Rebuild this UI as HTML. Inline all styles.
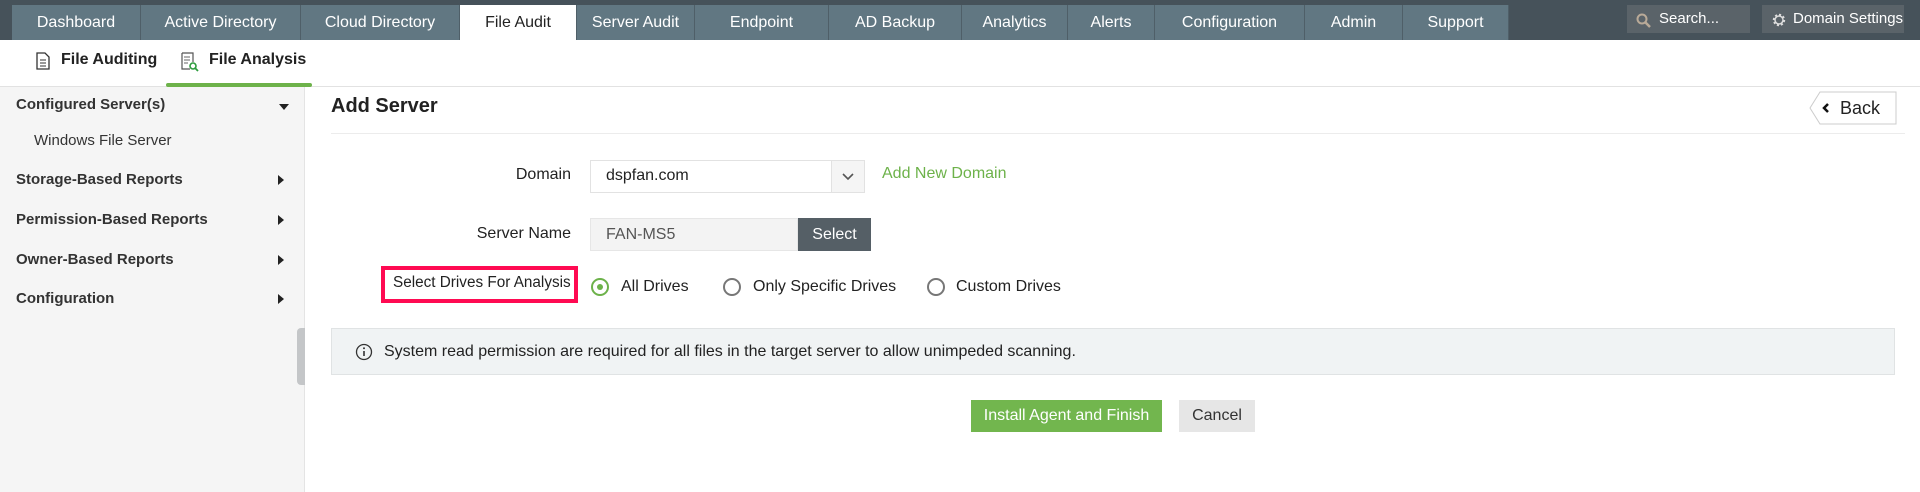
<!DOCTYPE html>
<html><head><meta charset="utf-8"><style>
*{box-sizing:border-box;margin:0;padding:0}
body{width:1920px;height:492px;overflow:hidden;background:#fff;font-family:"Liberation Sans",sans-serif;color:#222;position:relative;font-size:16px}
.a{position:absolute}
.top{left:0;top:0;width:1920px;height:40px;background:#46525a}
.tab{position:absolute;top:5px;height:35px;background:#617782;color:#fff;font-size:16px;line-height:35px;text-align:center;border-right:1px solid #4f5f68}
.tab.on{background:#fff;color:#222}
.tb{top:5px;height:28px;background:#5a6369;color:#fff;font-size:15px;line-height:28px}
.sub{left:0;top:40px;width:1920px;height:47px;border-bottom:1px solid #e2e2e2}
.side{left:0;top:87px;width:305px;height:405px;background:#f5f5f5;border-right:1px solid #e4e4e4}
.si{position:absolute;left:16px;font-size:15px;color:#333}
.arr{position:absolute;left:278px;width:0;height:0;border-top:5px solid transparent;border-bottom:5px solid transparent;border-left:6px solid #222}
.lbl{font-size:16px;color:#222}
.radio{position:absolute;width:18px;height:18px;border:2px solid #777;border-radius:50%}
</style></head><body>
<div class="a top"></div>
<div class="tab" style="left:12px;width:129px">Dashboard</div>
<div class="tab" style="left:141px;width:160px">Active Directory</div>
<div class="tab" style="left:301px;width:159px">Cloud Directory</div>
<div class="tab on" style="left:460px;width:117px">File Audit</div>
<div class="tab" style="left:577px;width:118px">Server Audit</div>
<div class="tab" style="left:695px;width:134px">Endpoint</div>
<div class="tab" style="left:829px;width:133px">AD Backup</div>
<div class="tab" style="left:962px;width:106px">Analytics</div>
<div class="tab" style="left:1068px;width:87px">Alerts</div>
<div class="tab" style="left:1155px;width:150px">Configuration</div>
<div class="tab" style="left:1305px;width:98px">Admin</div>
<div class="tab" style="left:1403px;width:106px">Support</div>
<div class="a tb" style="left:1627px;width:123px;padding-left:32px">Search...</div>
<svg class="a" style="left:1636px;top:13px" width="16" height="16"><circle cx="6" cy="6" r="4.5" fill="none" stroke="#b9aa98" stroke-width="2"/><path d="M9 9l5 5" stroke="#b9aa98" stroke-width="2.5"/></svg>
<div class="a tb" style="left:1762px;width:142px;padding-left:31px">Domain Settings</div>
<svg class="a" style="left:1771px;top:12px" width="16" height="16" viewBox="0 0 16 16"><circle cx="8" cy="8" r="5" fill="none" stroke="#ddd" stroke-width="2.4" stroke-dasharray="2 1.9"/><circle cx="8" cy="8" r="4" fill="none" stroke="#ddd" stroke-width="1.5"/></svg>
<div class="a sub"></div>
<svg class="a" style="left:36px;top:52px" width="14" height="18"><path d="M1 1h8l4 4v12H1z" fill="none" stroke="#333" stroke-width="1.3"/><path d="M4 8h6M4 11h6M4 14h6" stroke="#333"/></svg>
<div class="a" style="left:61px;top:51px;font-size:16px;font-weight:bold;color:#222">File Auditing</div>
<svg class="a" style="left:181px;top:52px" width="18" height="20"><path d="M1 1h11v9M1 1v16h8" fill="none" stroke="#555" stroke-width="1.2"/><path d="M3 5h6M3 8h6M3 11h4" stroke="#666"/><circle cx="12" cy="14" r="3" fill="none" stroke="#2e9c3e" stroke-width="1.6"/><path d="M14 16l3 3" stroke="#2e9c3e" stroke-width="1.8"/></svg>
<div class="a" style="left:209px;top:51px;font-size:16px;font-weight:bold;color:#222">File Analysis</div>
<div class="a" style="left:166px;top:83px;width:146px;height:4px;background:#6db24a;border-radius:2px"></div>
<div class="a side"></div>
<div class="si" style="top:96px;font-weight:bold">Configured Server(s)</div>
<div class="a" style="left:279px;top:104px;border-left:5px solid transparent;border-right:5px solid transparent;border-top:6px solid #222"></div>
<div class="si" style="left:34px;top:132px;font-size:15px">Windows File Server</div>
<div class="si" style="top:171px;font-weight:bold">Storage-Based Reports</div><div class="arr" style="top:175px"></div>
<div class="si" style="top:211px;font-weight:bold">Permission-Based Reports</div><div class="arr" style="top:215px"></div>
<div class="si" style="top:251px;font-weight:bold">Owner-Based Reports</div><div class="arr" style="top:255px"></div>
<div class="si" style="top:290px;font-weight:bold">Configuration</div><div class="arr" style="top:294px"></div>
<div class="a" style="left:297px;top:328px;width:8px;height:57px;background:#c4c6c8;border-radius:4px 0 0 4px"></div>
<div class="a" style="left:331px;top:95px;font-size:20px;font-weight:bold;color:#222">Add Server</div>
<div class="a" style="left:331px;top:133px;width:1574px;height:1px;background:#ececec"></div>
<svg class="a" style="left:1806px;top:91px" width="92" height="34"><path d="M14 1H90V33H14L4 17z" fill="#fff" stroke="#ccc"/><path d="M22 13l-4 4 4 4" fill="none" stroke="#111" stroke-width="2.5"/><text x="34" y="23" font-family="Liberation Sans" font-size="18" fill="#222">Back</text></svg>
<div class="a lbl" style="left:471px;top:166px;width:100px;text-align:right">Domain</div>
<div class="a" style="left:590px;top:160px;width:275px;height:33px;border:1px solid #e2e2e2"></div>
<div class="a" style="left:831px;top:161px;width:33px;height:31px;background:#f5f5f5;border-left:1px solid #e2e2e2"></div>
<svg class="a" style="left:842px;top:172px" width="12" height="10"><path d="M1 2l5 5 5-5" fill="none" stroke="#555" stroke-width="1.6"/></svg>
<div class="a lbl" style="left:606px;top:167px">dspfan.com</div>
<div class="a" style="left:882px;top:165px;color:#6db24a;font-size:16px">Add New Domain</div>
<div class="a lbl" style="left:421px;top:225px;width:150px;text-align:right">Server Name</div>
<div class="a" style="left:590px;top:218px;width:208px;height:33px;background:#f3f3f3;border:1px solid #e6e6e6"></div>
<div class="a" style="left:606px;top:226px;color:#555">FAN-MS5</div>
<div class="a" style="left:798px;top:218px;width:73px;height:33px;background:#555f66;color:#fff;text-align:center;line-height:33px">Select</div>
<div class="a" style="left:381px;top:266px;width:197px;height:37px;border:4px solid #ff0a52;background:#fff"></div>
<div class="a lbl" style="left:393px;top:274px;font-size:15.3px;white-space:nowrap">Select Drives For Analysis</div>
<div class="radio" style="left:591px;top:278px;border-color:#6db24a"></div>
<div class="a" style="left:597px;top:284px;width:6px;height:6px;border-radius:50%;background:#6db24a"></div>
<div class="a lbl" style="left:621px;top:278px">All Drives</div>
<div class="radio" style="left:723px;top:278px"></div>
<div class="a lbl" style="left:753px;top:278px">Only Specific Drives</div>
<div class="radio" style="left:927px;top:278px"></div>
<div class="a lbl" style="left:956px;top:278px">Custom Drives</div>
<div class="a" style="left:331px;top:328px;width:1564px;height:47px;background:#f0f3f4;border:1px solid #e0e3e4"></div>
<svg class="a" style="left:355px;top:343px" width="18" height="18"><circle cx="9" cy="9" r="7.5" fill="none" stroke="#333" stroke-width="1.3"/><path d="M9 8v5" stroke="#333" stroke-width="1.6"/><circle cx="9" cy="5.3" r="1" fill="#333"/></svg>
<div class="a" style="left:384px;top:343px;font-size:16px;color:#222;white-space:nowrap">System read permission are required for all files in the target server to allow unimpeded scanning.</div>
<div class="a" style="left:971px;top:400px;width:191px;height:32px;background:#72b64e;color:#fff;text-align:center;line-height:32px">Install Agent and Finish</div>
<div class="a" style="left:1179px;top:400px;width:76px;height:32px;background:#e6e6e6;color:#333;text-align:center;line-height:32px">Cancel</div>
</body></html>
